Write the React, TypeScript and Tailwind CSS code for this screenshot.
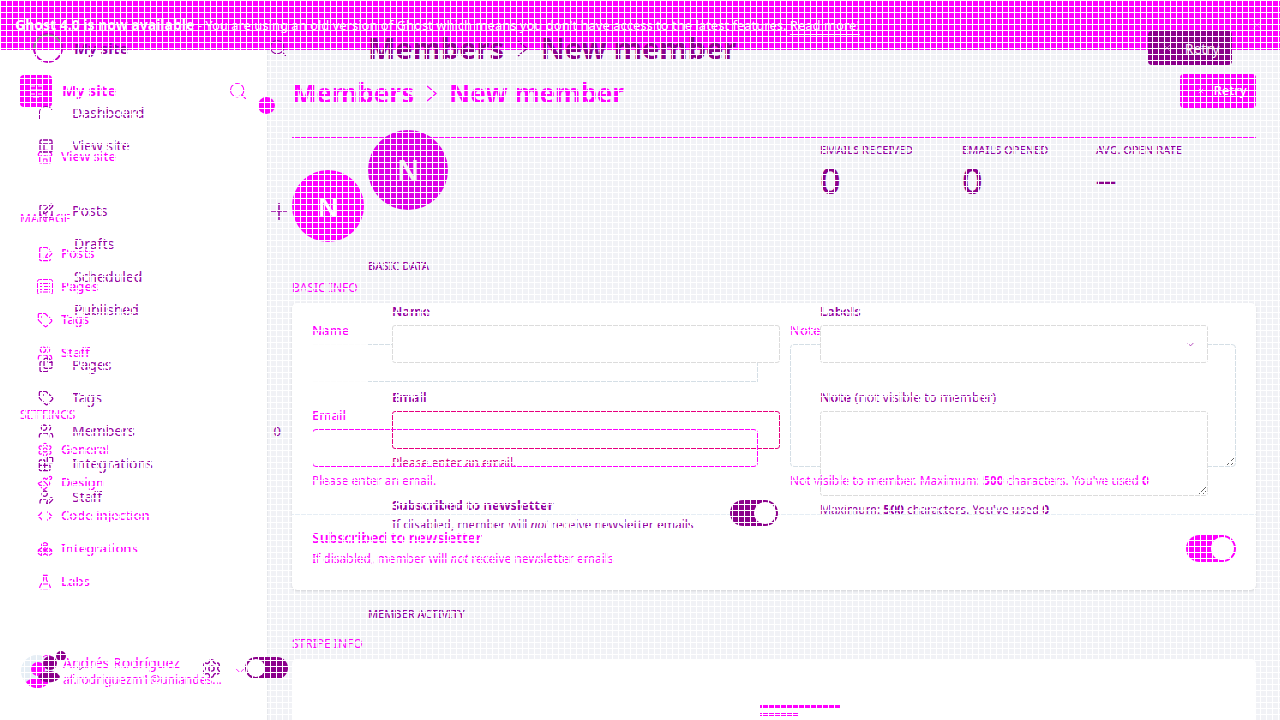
import React from 'react';
import {
  Search, Layout, FilePenLine, Tag, Users, Settings, Paintbrush, Code, Boxes, FlaskConical,
  ChevronDown, X, SquarePen, Files, Blocks, UserPen, Store,
} from 'lucide-react';

type NavEntry = { label: string; icon: React.ElementType };
type IconProps = { className?: string };

function PageListIcon({ className }: IconProps) {
  return (
    <svg viewBox="0 0 16 16" className={`size-4 ${className ?? ''}`} fill="none" stroke="currentColor">
      <rect x="0.5" y="0.5" width="15" height="15" rx="2" />
      <path d="M3 4.500h10M3 7.500h2M7 7.500h6M3 10.500h2M7 10.500h6M3 13h10" />
    </svg>
  );
}

function ArchIcon({ className }: IconProps) {
  return (
    <svg viewBox="0 0 16 16" className={`size-4 ${className ?? ''}`} fill="none" stroke="currentColor">
      <path d="M1.500 14V7c0-3 3-5.500 6.500-5.500 3 0 5 1.500 6 3.500" />
    </svg>
  );
}

function PlusIcon() {
  return (
    <svg viewBox="0 0 18 18" className="size-[18px]" stroke="currentColor" strokeWidth="1.500">
      <path d="M0 9h17M9 1v17" />
    </svg>
  );
}

function Crumb() {
  return (
    <svg viewBox="0 0 11 17" className="h-[17px] w-[11px]" fill="none" stroke="currentColor" strokeWidth="1.300">
      <path d="M1 1l9 7.500-9 7.500" />
    </svg>
  );
}

const manage: NavEntry[] = [
  { label: 'Posts', icon: FilePenLine },
  { label: 'Pages', icon: PageListIcon },
  { label: 'Tags', icon: Tag },
  { label: 'Staff', icon: Users },
];
const settings: NavEntry[] = [
  { label: 'General', icon: Settings },
  { label: 'Design', icon: Paintbrush },
  { label: 'Code injection', icon: Code },
  { label: 'Integrations', icon: Boxes },
  { label: 'Labs', icon: FlaskConical },
];
const content: NavEntry[] = [
  { label: 'Pages', icon: Files },
  { label: 'Tags', icon: Tag },
  { label: 'Members', icon: Users },
  { label: 'Integrations', icon: Blocks },
  { label: 'Staff', icon: UserPen },
];

function NavGroup({ items }: { items: NavEntry[] }) {
  return (
    <ul>
      {items.map(({ label, icon: Icon }) => (
        <li key={label}>
          <a href="#" className="flex h-[33px] items-center gap-2 pl-[37px] text-[13px] font-medium">
            <Icon size={16} strokeWidth={1.8} />
            {label}
          </a>
        </li>
      ))}
    </ul>
  );
}

function FrontSidebar() {
  return (
    <aside className="relative flex w-[268px] shrink-0 flex-col border-r border-[#e6e8ec] bg-white text-[#ff00ff]">
      <header className="flex h-[57px] items-center gap-[10px] pl-5 pr-[19px] pt-[25px]">
        <div className="grid size-8 place-items-center rounded bg-[#ff00ff]">
          <svg viewBox="0 0 16 16" className="size-4" fill="none" stroke="#fff" strokeWidth="1">
            <path d="M2 3h5M10 3h4M2 7h12M2 11h5M10 11h4M5 14h6" />
          </svg>
        </div>
        <span className="pb-0.5 text-[15px] font-bold">My site</span>
        <button aria-label="Search" className="ml-auto"><Search size={20} strokeWidth={1.3} /></button>
      </header>
      <button aria-label="Collapse" className="absolute -right-2 top-[47px] z-10 size-[17px] rounded-full bg-[#ff00ff]" />
      <nav aria-label="Site" className="pt-[33px]">
        <NavGroup items={[{ label: 'View site', icon: Store }]} />
        <h3 className="mb-[10px] mt-[38px] pl-5 text-[12px] leading-4">MANAGE</h3>
        <NavGroup items={manage} />
        <h3 className="mb-[10px] mt-[38px] pl-5 text-[12px] leading-4">SETTINGS</h3>
        <NavGroup items={settings} />
      </nav>
      <footer className="mt-auto flex items-center gap-[9px] pb-8 pl-5 pr-5">
        <svg viewBox="0 0 34 34" className="size-[34px] shrink-0">
          <circle cx="17" cy="17" r="16" fill="#e6eef5" />
          <circle cx="18" cy="15" r="7" fill="#ff00ff" />
          <path d="M6 28c2-2 6-4 11-4s10 2 12 4c-5 8-18 8-23 0z" fill="#ff00ff" />
          <path d="M23 3c4-3 8-2 9 1" stroke="#ff00ff" fill="none" />
        </svg>
        <div>
          <div className="text-[14px] leading-[17px]">Andrés Rodríguez</div>
          <div className="text-[12px] leading-[17px]">af.rodriguezm1@uniandes...</div>
        </div>
        <ChevronDown size={14} strokeWidth={1.5} className="ml-auto shrink-0" />
      </footer>
    </aside>
  );
}

function FrontPage() {
  return (
    <div className="flex h-full flex-col">
      <div className="flex h-[50px] shrink-0 items-center bg-[#ff00ff] px-[15px] text-[13px] text-white">
        <p><b className="text-[14px]">Ghost 4.0 is now available</b> - You are using an old version of Ghost which means you don't have access to the latest features. <a href="#" className="underline underline-offset-4">Read more!</a></p>
        <button aria-label="Dismiss" className="ml-auto opacity-40"><X size={16} strokeWidth={1} /></button>
      </div>
      <div className="flex min-h-0 flex-1">
        <FrontSidebar />
        <main className="min-w-0 flex-1 overflow-hidden px-6 text-[#ff00ff]">
          <header className="flex h-[88px] items-start justify-between border-b border-[#ff00ff] pt-6">
            <h1 className="flex items-center gap-3 text-[26px] font-bold leading-[38px]">Members <Crumb /> New member</h1>
            <button className="flex h-[34px] w-[76px] items-center justify-center gap-2 rounded bg-[#ff00ff] pl-2 text-[13px] font-medium text-white"><X size={8} strokeWidth={2} />Retry</button>
          </header>
          <div className="mt-8 grid size-[72px] place-items-center rounded-full bg-[#ff00ff] text-[26px] font-semibold text-white">N</div>
          <h4 className="mt-[38px] text-[12px] leading-4">BASIC INFO</h4>
          <section className="mt-[7px] rounded-[5px] bg-white shadow-sm">
            <div className="grid h-[211px] grid-cols-2 gap-8 px-5 pt-[17px] text-[13px]">
              <div>
                <label htmlFor="a-name" className="block font-medium leading-5">Name</label>
                <input id="a-name" className="mt-1 h-[38px] w-full border border-transparent [border-image:linear-gradient(to_right,#fdfdfd_56px,#d5dfe6_56px)_1]" />
                <label htmlFor="a-email" className="mt-[23px] block font-medium leading-5">Email</label>
                <input id="a-email" className="relative z-20 mt-1 h-[38px] w-full rounded-[4px] border border-[#ff00ff]" />
                <p className="relative z-20 mt-1 text-[12px] leading-5">Please enter an email.</p>
              </div>
              <div>
                <label htmlFor="a-note" className="block font-medium leading-5">Note</label>
                <textarea id="a-note" className="mt-1 block h-[123px] w-full rounded-[4px] border border-[#d5dfe6]" />
                <p className="relative z-20 mt-1 text-[12px] leading-5">Not visible to member. Maximum: <b>500</b> characters. You've used <b>0</b></p>
              </div>
            </div>
            <div className="flex h-[76px] items-center justify-between border-t border-[#e6eef5] px-5 pb-2">
              <div>
                <div className="text-[14px] font-semibold leading-5">Subscribed to newsletter</div>
                <p className="text-[12px] leading-[22px]">If disabled, member will <i>not</i> receive newsletter emails</p>
              </div>
              <label className="flex h-[27px] w-[50px] items-center justify-end rounded-full bg-[#ff00ff] p-0.5">
                <input type="checkbox" defaultChecked aria-label="Newsletter" className="size-[23px] appearance-none rounded-full bg-white" />
              </label>
            </div>
          </section>
          <h4 className="mt-[46px] text-[12px] leading-4">STRIPE INFO</h4>
          <section className="mt-[7px] flex h-40 justify-center rounded-[5px] bg-white pt-[45px]">
            <svg viewBox="0 0 80 13" className="ml-[52px] h-[13px] w-20" fill="#ff00ff">
              <path d="M0 1h80v3H0zM0 9h38v1H0zM0 11h38v1H0z" />
            </svg>
          </section>
        </main>
      </div>
    </div>
  );
}

function SubLink({ children }: { children: string }) {
  return <li><a href="#" className="flex h-[33px] items-center pl-[74px]">{children}</a></li>;
}

function BackRow({ label, icon: Icon, end }: NavEntry & { end?: React.ReactNode }) {
  return (
    <li>
      <a href="#" className="flex h-[33px] items-center pl-[38px] pr-6">
        <Icon size={16} strokeWidth={1.9} className="mr-[18px]" />
        {label}
        <span className="ml-auto">{end}</span>
      </a>
    </li>
  );
}

function BackSidebar() {
  return (
    <aside className="flex w-[312px] shrink-0 flex-col text-[14px]">
      <header className="flex h-16 items-center pl-8 pr-6 pt-8">
        <svg viewBox="0 0 32 32" className="size-8" fill="none" strokeWidth="2">
          <circle cx="16" cy="16" r="14" stroke="#c000c0" />
          <path d="M2 17A14 14 0 0 1 29 12" stroke="#888" />
        </svg>
        <span className="ml-[10px] text-[15px] font-bold">My site</span>
        <button aria-label="Search menu" className="ml-auto"><Search size={20} strokeWidth={1.4} /></button>
      </header>
      <nav aria-label="Main" className="pt-8">
        <ul>
          <BackRow label="Dashboard" icon={ArchIcon} />
          <BackRow label="View site" icon={Layout} />
        </ul>
        <ul className="mt-8">
          <BackRow label="Posts" icon={SquarePen} end={<PlusIcon />} />
          <SubLink>Drafts</SubLink>
          <SubLink>Scheduled</SubLink>
          <SubLink>Published</SubLink>
        </ul>
        <ul className="mt-[22px]">
          {content.map((item) => (
            <BackRow key={item.label} {...item} end={item.label === 'Members' ? <span className="pr-[7px] text-[13px]">0</span> : null} />
          ))}
        </ul>
      </nav>
      <footer className="mt-auto flex items-center pb-[34px] pl-[38px] pr-6">
        <svg viewBox="0 0 30 36" className="h-9 w-[30px]" fill="#8b008b">
          <circle cx="12" cy="13" r="7" />
          <path d="M0 27c4-8 19-8 22 0-4 7-18 7-22 0z" />
          <circle cx="23" cy="6" r="5" />
        </svg>
        <ChevronDown size={14} strokeWidth={1.5} className="ml-[5px]" />
        <Settings size={21} strokeWidth={1.6} className="ml-auto mr-[23px]" />
        <label className="flex h-[22px] w-[43px] items-center rounded-full bg-[#8b008b] p-0.5">
          <input type="checkbox" aria-label="Night mode" className="size-[18px] appearance-none rounded-full bg-white" />
        </label>
      </footer>
    </aside>
  );
}

const stats = [
  { label: 'EMAILS RECEIVED', value: '0', width: 'w-[142px]' },
  { label: 'EMAILS OPENED', value: '0', width: 'w-[134px]' },
  { label: 'AVG. OPEN RATE', value: '—', width: 'w-[136px]' },
];

function BackPage() {
  return (
    <div className="flex h-full text-[#9400a0]">
      <BackSidebar />
      <main className="min-w-0 flex-1 pl-14 pr-12">
        <header className="flex h-24 items-center justify-between">
          <h1 className="flex items-center gap-[13px] text-[29px] font-bold text-[#8b008b]">Members <Crumb /> New member</h1>
          <button className="flex h-[34px] w-[84px] items-center justify-center gap-3 rounded bg-[#8b008b] text-[14px] text-[#f3e6f3]"><X size={12} strokeWidth={1} />Retry</button>
        </header>
        <div className="mt-[34px] flex items-start justify-between">
          <div className="grid size-20 place-items-center rounded-full bg-[#dc00e6] text-[28px] font-semibold text-[#eee]">N</div>
          <dl className="flex pt-3">
            {stats.map((s) => (
              <div key={s.label} className={s.width}>
                <dt className="text-[11px] font-medium leading-4">{s.label}</dt>
                <dd className={s.value === '0' ? 'text-[36px] font-medium leading-[46px] text-[#8b008b]' : 'text-[20px] font-bold leading-[46px] text-[#8b008b]'}>{s.value}</dd>
              </div>
            ))}
          </dl>
        </div>
        <h4 className="mt-12 text-[11px] font-medium leading-4">BASIC DATA</h4>
        <div className="mt-[27px] grid grid-cols-2 gap-10 px-6 text-[13px]">
          <div>
            <label htmlFor="b-name" className="block font-semibold leading-5">Name</label>
            <input id="b-name" className="mt-1 h-[38px] w-full rounded-[3px] border border-[#dcdcdc] bg-white" />
            <label htmlFor="b-email" className="mt-6 block font-semibold leading-5">Email</label>
            <input id="b-email" className="mt-1 h-[38px] w-full rounded-[3px] border border-[#e6007e]" />
            <p className="mt-1 text-[12px] leading-5 text-[#d00084]">Please enter an email.</p>
            <div className="mt-[22px] flex items-start justify-between pr-0.5">
              <div>
                <div className="text-[13px] font-bold leading-5">Subscribed to newsletter</div>
                <p className="text-[12px] leading-5">If disabled, member will <i>not</i> receive newsletter emails</p>
              </div>
              <label className="mt-[5px] flex h-[26px] w-12 items-center justify-end rounded-full bg-[#8b008b] p-0.5">
                <input type="checkbox" defaultChecked aria-label="Subscribed" className="size-[22px] appearance-none rounded-full bg-white" />
              </label>
            </div>
          </div>
          <div>
            <label htmlFor="b-labels" className="block font-semibold leading-5">Labels</label>
            <div className="mt-1 flex h-[38px] items-center rounded-[3px] border border-[#dcdcdc] bg-white pr-[11px]">
              <input id="b-labels" className="min-w-0 flex-1" />
              <ChevronDown size={11} strokeWidth={1.5} />
            </div>
            <label htmlFor="b-note" className="mt-6 block leading-5"><b className="font-semibold">Note</b> (not visible to member)</label>
            <textarea id="b-note" className="mt-1 block h-[85px] w-full rounded-[3px] border border-[#dcdcdc] bg-white" />
            <p className="mt-1 text-[12px] leading-5">Maximum: <b>500</b> characters. You've used <b>0</b></p>
          </div>
        </div>
        <h4 className="mt-[71px] text-[11px] font-medium leading-4">MEMBER ACTIVITY</h4>
      </main>
    </div>
  );
}

export default function App() {
  return (
    <div className="relative h-screen overflow-hidden bg-[#f1f2f6] font-['Noto_Sans','Open_Sans',sans-serif]">
      <FrontPage />
      <div className="absolute inset-0 z-10"><BackPage /></div>
      <div className="pointer-events-none absolute inset-0 z-30 bg-[linear-gradient(to_right,#fff_1px,transparent_1px),linear-gradient(to_bottom,#fff_1px,transparent_1px)] bg-[size:6px_6px]" />
    </div>
  );
}
